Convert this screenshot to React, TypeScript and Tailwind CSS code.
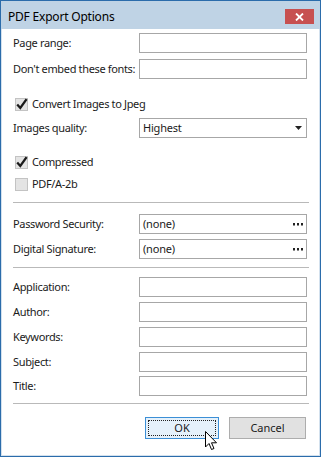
import React from 'react'

const font = { fontFamily: '"Noto Sans", "Open Sans", sans-serif' }

const lbl = 'w-[126px] shrink-0 text-[11px] tracking-[-0.35px] whitespace-nowrap text-[#1b1b1b]'

const TextRow = ({ label, mt }: { label: string; mt: string }) => (
  <div className={`flex items-center h-[20px] ${mt}`}>
    <div className={lbl}>{label}</div>
    <div className="w-[169px] h-[20px] border border-[#a7a7a7] bg-white" />
  </div>
)

const Dots = () => (
  <svg width="10" height="3" viewBox="0 0 10 3">
    <rect x="0" y="0" width="2" height="2.5" fill="#222" />
    <rect x="4" y="0" width="2" height="2.5" fill="#222" />
    <rect x="8" y="0" width="2" height="2.5" fill="#222" />
  </svg>
)

const PickRow = ({ label, mt }: { label: string; mt: string }) => (
  <div className={`flex items-center h-[20px] ${mt}`}>
    <div className={lbl}>{label}</div>
    <div className="w-[169px] h-[20px] border border-[#a7a7a7] bg-white flex items-center justify-between pl-[3px] pr-[3px]">
      <span className="text-[11px] tracking-[-0.2px] text-[#1b1b1b]">(none)</span>
      <Dots />
    </div>
  </div>
)

const Check = ({ label, checked, mt }: { label: string; checked?: boolean; mt: string }) => (
  <div className={`flex items-center h-[13px] ${mt}`}>
    <div className="ml-[2px] w-[13px] h-[13px] border border-[#c3c3c3] bg-[#e4e4e4] relative">
      {checked && (
        <svg className="absolute left-[-1px] top-[-2px]" width="14" height="14" viewBox="0 0 14 14">
          <path d="M2.2 7.6 L5.3 11 L11.6 2.2" fill="none" stroke="#1a1a1a" strokeWidth="2.3" />
        </svg>
      )}
    </div>
    <span className="ml-[4px] text-[11px] tracking-[-0.35px] whitespace-nowrap text-[#1b1b1b]">{label}</span>
  </div>
)

const Sep = ({ mt }: { mt: string }) => <div className={`h-px bg-[#b9b9b9] w-[296px] ${mt}`} />

export default function App() {
  return (
    <div
      className="w-[321px] h-[457px] border border-[#2b6cab] bg-white flex flex-col relative"
      style={font}
    >
      <div className="h-[28px] bg-[#bfd3e5] flex items-center justify-between pl-[7px] pr-[6px] shrink-0">
        <span className="text-[12px] tracking-[-0.2px] text-black mt-[3px]">PDF Export Options</span>
        <div className="w-[29px] h-[15px] bg-[#c75050] flex items-center justify-center mt-[3px]">
          <svg width="9" height="8" viewBox="0 0 9 8">
            <path d="M1 0.5 L8 7.5 M8 0.5 L1 7.5" stroke="#fff" strokeWidth="1.8" />
          </svg>
        </div>
      </div>

      <div className="flex-1 flex flex-col pl-[11px] pr-[12px] border-x border-b border-[#d3e1ee]">
        <TextRow label="Page range:" mt="mt-[4px]" />
        <TextRow label="Don't embed these fonts:" mt="mt-[6px]" />

        <Check label="Convert Images to Jpeg" checked mt="mt-[19px]" />

        <div className="flex items-center h-[20px] mt-[7px]">
          <div className={lbl}>Images quality:</div>
          <div className="w-[169px] h-[20px] border border-[#a7a7a7] bg-white flex items-center justify-between pl-[3px] pr-[4px]">
            <span className="text-[11px] tracking-[-0.2px] text-[#1b1b1b]">Highest</span>
            <svg width="7" height="4" viewBox="0 0 7 4">
              <path d="M0 0 H7 L3.5 4 Z" fill="#222" />
            </svg>
          </div>
        </div>

        <Check label="Compressed" checked mt="mt-[18px]" />
        <Check label="PDF/A-2b" mt="mt-[9px]" />

        <Sep mt="mt-[11px]" />

        <PickRow label="Password Security:" mt="mt-[11px]" />
        <PickRow label="Digital Signature:" mt="mt-[5px]" />

        <Sep mt="mt-[8px]" />

        <TextRow label="Application:" mt="mt-[9px]" />
        <TextRow label="Author:" mt="mt-[5px]" />
        <TextRow label="Keywords:" mt="mt-[5px]" />
        <TextRow label="Subject:" mt="mt-[5px]" />
        <TextRow label="Title:" mt="mt-[4px]" />

        <Sep mt="mt-[7px]" />

        <div className="flex justify-end gap-[10px] mt-[13px] pr-px">
          <div className="w-[74px] h-[22px] border border-[#3c8fd6] bg-[#e5f1fb] p-[2px]">
            <div className="w-full h-full border border-dotted border-[#222] flex items-center justify-center text-[11px] text-[#1b1b1b]">
              OK
            </div>
          </div>
          <div className="w-[77px] h-[22px] border border-[#adadad] bg-[#e1e1e1] flex items-center justify-center text-[11px] text-[#1b1b1b]">
            Cancel
          </div>
        </div>
      </div>

      <svg className="absolute left-[204px] top-[430px]" width="13" height="20" viewBox="0 0 13 20">
        <path
          d="M0.5 0.5 V16 L4 12.5 L6.5 18.5 L9 17.5 L6.5 11.8 H11.5 Z"
          fill="#fff"
          stroke="#000"
          strokeWidth="1"
          strokeLinejoin="miter"
        />
      </svg>
    </div>
  )
}
